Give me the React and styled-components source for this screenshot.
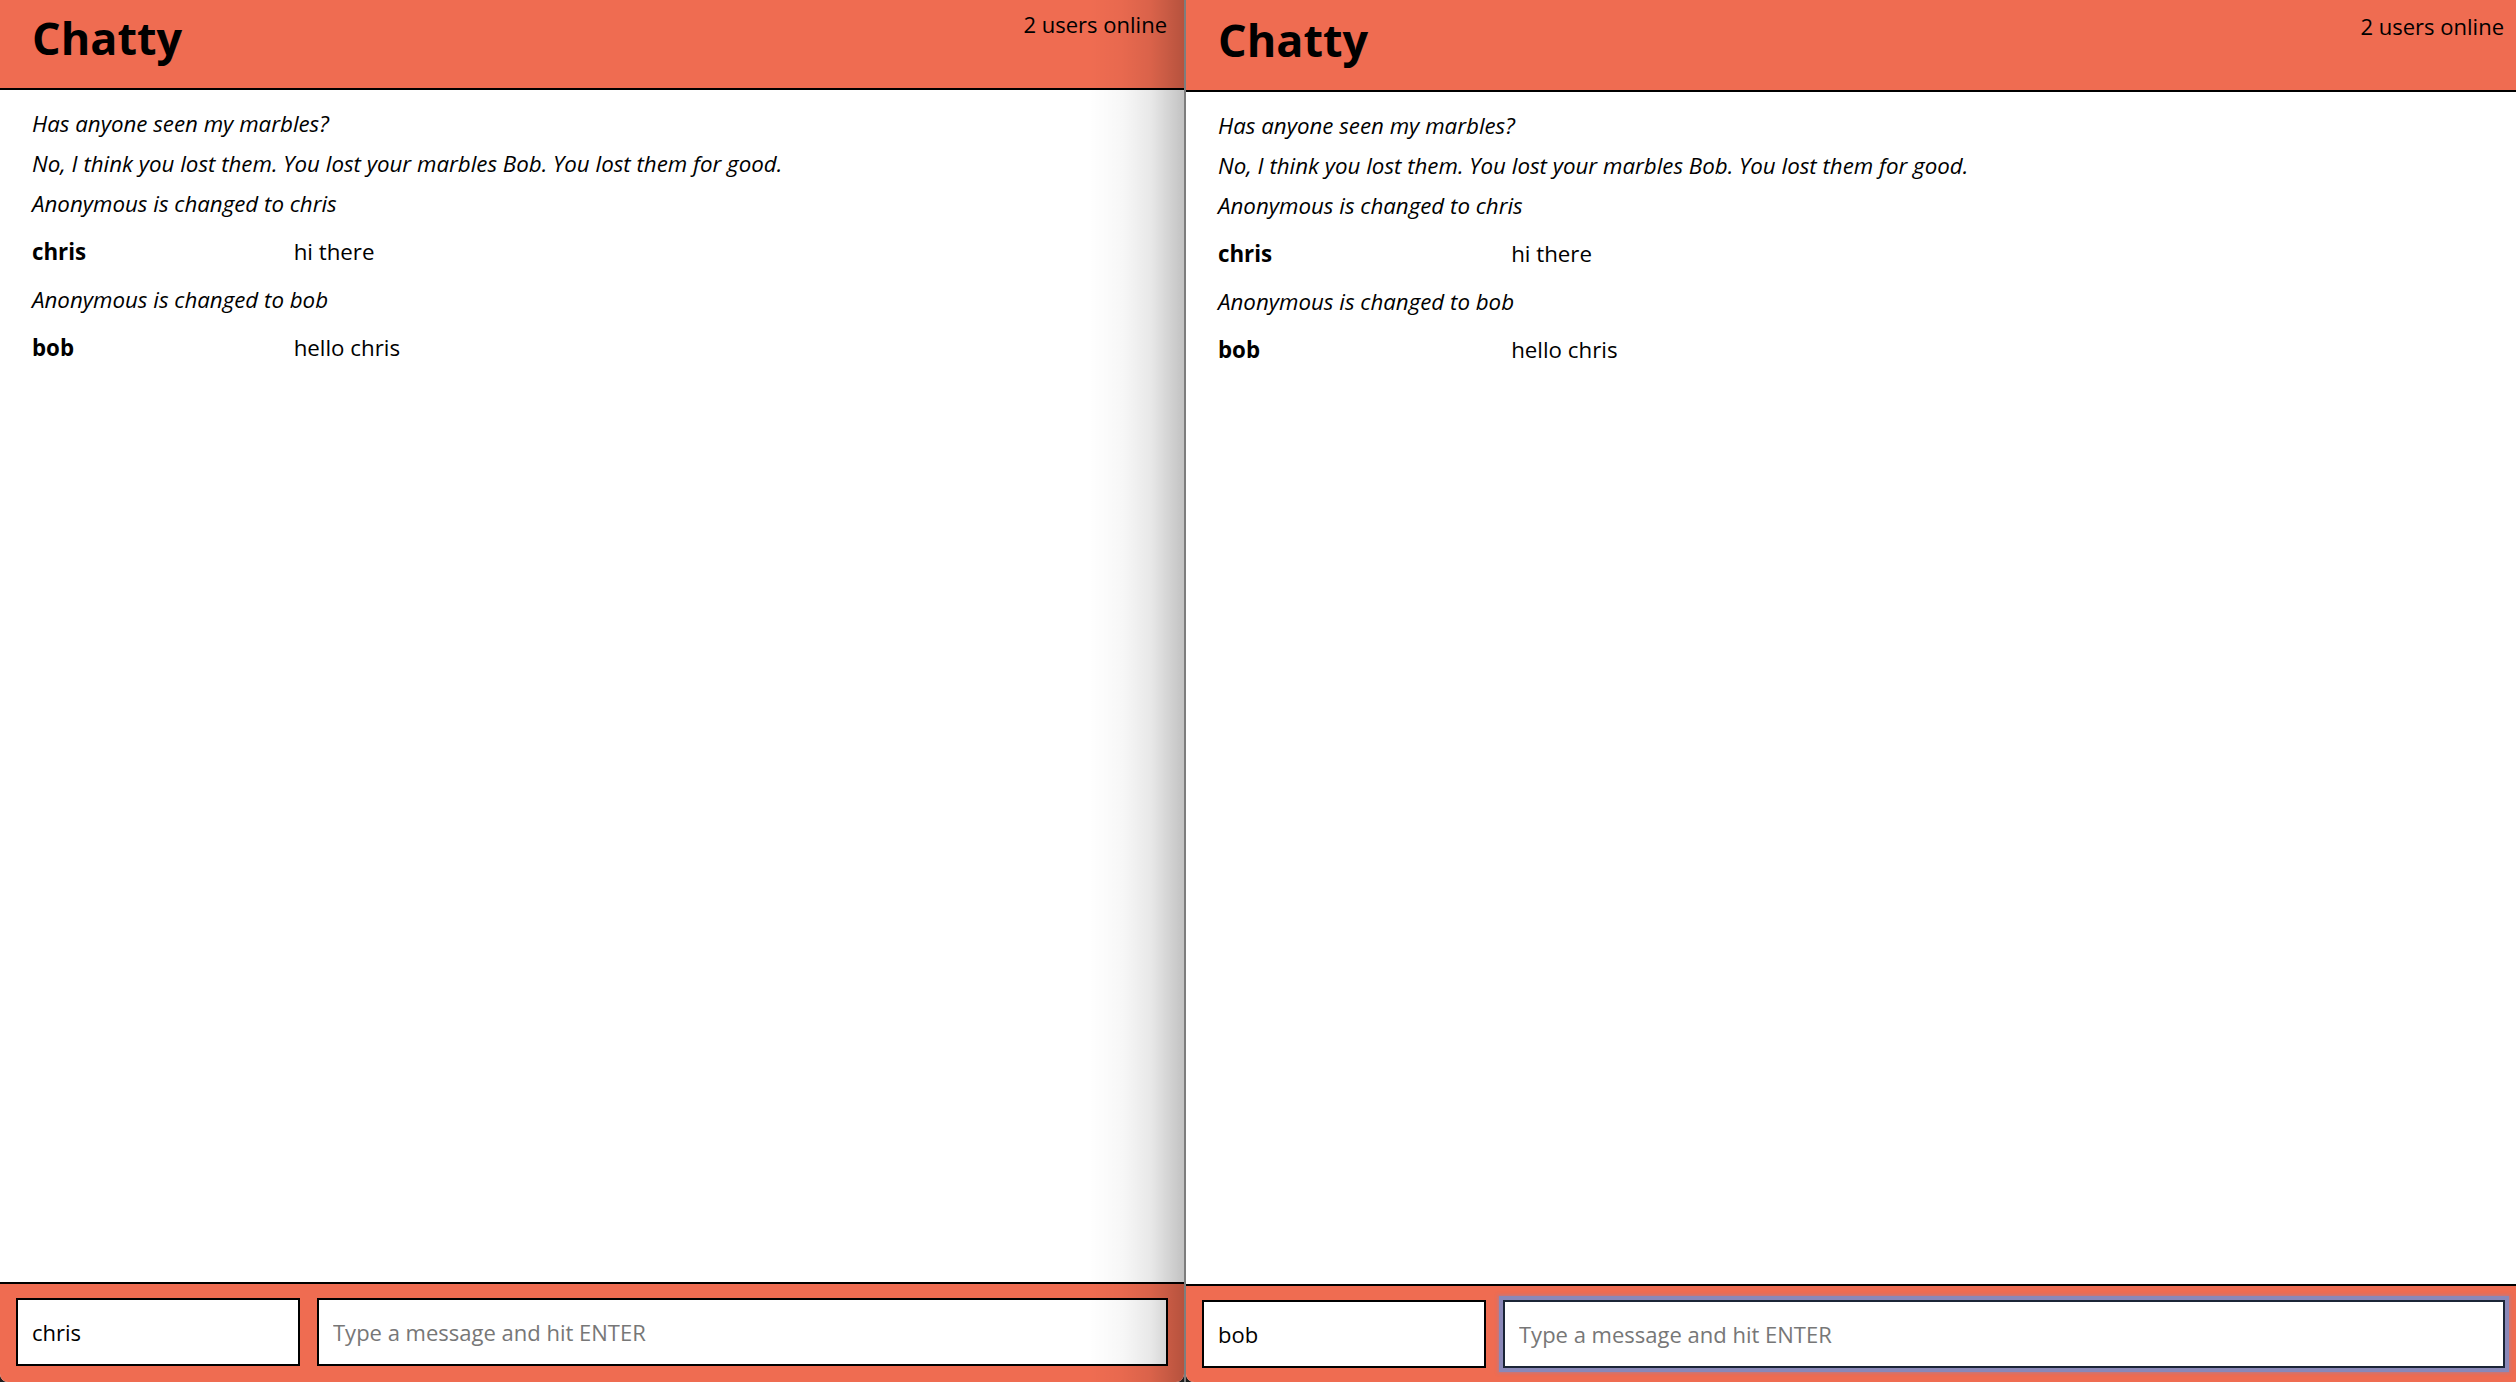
import React from 'react'
import styled, { createGlobalStyle } from 'styled-components'

const GlobalStyle = createGlobalStyle`
    html, body {
        margin: 0;
        padding: 0;
        background: #1d1d1d;
    }
    body {
        font-family: "Open Sans", "Liberation Sans", sans-serif;
        color: #000;
    }
`

const ORANGE = '#EF6C51'

const Desktop = styled.div`
    display: flex;
    width: 100vw;
    height: 100vh;
    overflow: hidden;
`
const Divider = styled.div`
    flex: 0 0 2px;
    background: #7d7d7d;
`
const Window = styled.section`
    position: relative;
    flex: 0 0 ${p => p.$width}px;
    display: flex;
    flex-direction: column;
    background: #fff;
    border-radius: 0 0 8px 8px;
    overflow: hidden;
`
const Header = styled.header`
    display: flex;
    justify-content: space-between;
    align-items: flex-start;
    box-sizing: border-box;
    height: ${p => 90 + p.$offset}px;
    padding: ${p => p.$offset}px 17px 0 32px;
    background: ${ORANGE};
    border-bottom: 2px solid #000;
`
const Brand = styled.h1`
    margin: 7px 0 0;
    font-size: 45px;
    line-height: 62px;
    font-weight: 700;
`
const Counter = styled.span`
    margin-top: 9px;
    font-size: 22px;
    line-height: 30px;
`
const Messages = styled.main`
    flex: 1;
    padding: 14px 32px 0;
    overflow: hidden;
`
const SystemLine = styled.div`
    font-size: 22.3px;
    line-height: 40px;
    font-style: italic;
`
const MessageRow = styled.div`
    display: flex;
    font-size: 22.3px;
    line-height: 56px;
`
const Username = styled.span`
    flex: 0 0 calc(20.86% + 28px);
    font-weight: 700;
`
const Content = styled.span`
    flex: 1;
`
const Footer = styled.footer`
    display: flex;
    gap: 17px;
    padding: 14px 16px ${p => 16 - p.$offset}px;
    background: ${ORANGE};
    border-top: 2px solid #000;
`
const Field = styled.input`
    box-sizing: border-box;
    min-width: 0;
    height: 68px;
    padding: 0 14px;
    border: 2px solid #000;
    border-radius: 0;
    background: #fff;
    font-family: "Open Sans", "Liberation Sans", sans-serif;
    font-size: 22px;
    color: #000;
    outline: none;
`
const NameInput = styled(Field)`
    flex: 0 0 auto;
    width: 284px;
`
const MessageInput = styled(Field)`
    flex: 1 1 0;
    &::placeholder {
        color: #777;
    }
    &:focus {
        border-color: #1b2536;
        box-shadow: 0 0 0 4px #8a88b8, 0 0 3px 5px rgba(138, 136, 184, 0.5);
    }
`
const Shadow = styled.div`
    position: absolute;
    top: 0;
    right: 0;
    bottom: 0;
    width: 95px;
    pointer-events: none;
    background: linear-gradient(to right,
        rgba(0, 0, 0, 0) 0%,
        rgba(0, 0, 0, 0.03) 35%,
        rgba(0, 0, 0, 0.09) 65%,
        rgba(0, 0, 0, 0.24) 100%);
`

const messages = [
    { type: 'system', content: 'Has anyone seen my marbles?' },
    { type: 'system', content: 'No, I think you lost them. You lost your marbles Bob. You lost them for good.' },
    { type: 'system', content: 'Anonymous is changed to chris' },
    { type: 'user', username: 'chris', content: 'hi there' },
    { type: 'system', content: 'Anonymous is changed to bob' },
    { type: 'user', username: 'bob', content: 'hello chris' },
]

function ChatWindow(props) {
    const { width, offset, user, focused, shadow } = props

    const lines = messages.map((m, i) =>
        m.type === 'system'
            ? <SystemLine key={i}>{m.content}</SystemLine>
            : <MessageRow key={i}>
                <Username>{m.username}</Username>
                <Content>{m.content}</Content>
              </MessageRow>
    )

    return (
        <Window $width={width}>
            <Header $offset={offset}>
                <Brand>Chatty</Brand>
                <Counter>2 users online</Counter>
            </Header>
            <Messages>{lines}</Messages>
            <Footer $offset={offset}>
                <NameInput defaultValue={user} />
                <MessageInput placeholder="Type a message and hit ENTER" autoFocus={focused} />
            </Footer>
            {shadow && <Shadow />}
        </Window>
    )
}

export default function App() {
    return (
        <>
            <GlobalStyle />
            <Desktop>
                <ChatWindow width={1184} offset={0} user="chris" shadow />
                <Divider />
                <ChatWindow width={1335} offset={2} user="bob" focused />
            </Desktop>
        </>
    )
}
